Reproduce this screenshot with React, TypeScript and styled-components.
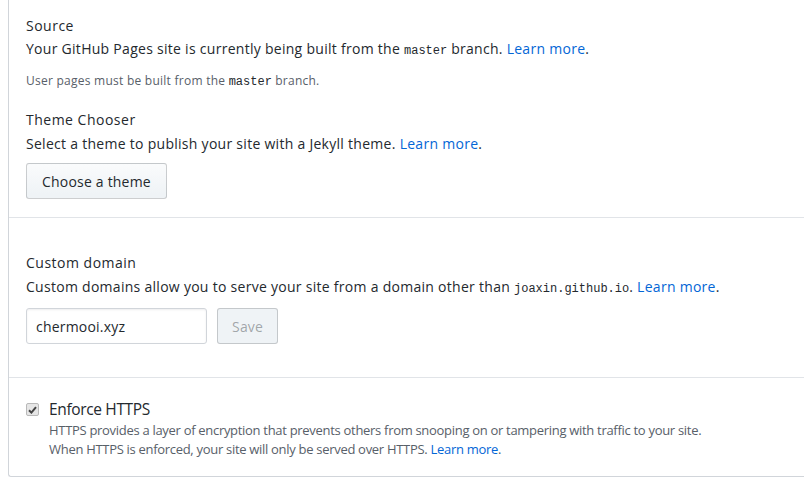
import React from "react";
import styled, { createGlobalStyle } from "styled-components";

const Global = createGlobalStyle`
  html, body { margin: 0; padding: 0; background: #fff; }
  body {
    font-family: "Open Sans", "Noto Sans", sans-serif;
    color: #24292e;
    -webkit-font-smoothing: antialiased;
  }
`;

const Page = styled.div`
  padding-left: 8px;
`;

const Box = styled.div`
  border-left: 1px solid #d1d5da;
  border-bottom: 1px solid #d1d5da;
  border-bottom-left-radius: 3px;
`;

const Section = styled.section<{ $pt: number; $pb: number; $divider?: boolean }>`
  padding: ${(p) => p.$pt}px 18px ${(p) => p.$pb}px 17px;
  border-bottom: ${(p) => (p.$divider ? "1px solid #e1e4e8" : "none")};
  display: flex;
  flex-direction: column;
  align-items: flex-start;
`;

const Heading = styled.h3<{ $mt?: number; $mb?: number }>`
  margin: ${(p) => p.$mt ?? 0}px 0 ${(p) => p.$mb ?? 1}px;
  font-size: 14px;
  line-height: 22px;
  font-weight: 400;
  letter-spacing: 0.5px;
  color: #24292e;
`;

const Text = styled.p`
  margin: 0;
  font-size: 14px;
  line-height: 21px;
  letter-spacing: 0.28px;
  white-space: nowrap;
`;

const Note = styled.p<{ $mt?: number }>`
  margin: ${(p) => p.$mt ?? 0}px 0 0;
  font-size: 12px;
  line-height: 18px;
  color: #586069;
  letter-spacing: 0.25px;
  white-space: nowrap;
`;

const Code = styled.code`
  font-family: "Liberation Mono", "DejaVu Sans Mono", monospace;
  font-size: 12px;
  letter-spacing: 0;
  color: #24292e;
`;

const Link = styled.a`
  color: #0366d6;
  text-decoration: none;
`;

const Button = styled.button<{ $mt?: number; $px?: number; $disabled?: boolean }>`
  margin-top: ${(p) => p.$mt ?? 0}px;
  height: 36px;
  padding: 0 ${(p) => p.$px ?? 15}px;
  font-family: inherit;
  font-size: 14px;
  letter-spacing: 0.2px;
  color: ${(p) => (p.$disabled ? "rgba(36,41,46,0.4)" : "#24292e")};
  background: ${(p) =>
    p.$disabled ? "#eff3f6" : "linear-gradient(-180deg, #fafbfc 0%, #eff3f6 90%)"};
  border: 1px solid rgba(27, 31, 35, 0.2);
  border-radius: 3px;
  box-sizing: border-box;
`;

const FormRow = styled.div`
  margin-top: 8px;
  display: flex;
  gap: 10px;
`;

const Input = styled.input`
  width: 181px;
  height: 36px;
  box-sizing: border-box;
  padding: 0 9px;
  font-family: inherit;
  font-size: 14px;
  letter-spacing: 0.2px;
  color: #24292e;
  border: 1px solid #d1d5da;
  border-radius: 3px;
  outline: none;
  box-shadow: inset 0 1px 2px rgba(27, 31, 35, 0.075);
`;

const CheckRow = styled.div`
  display: flex;
  gap: 10px;
  align-items: flex-start;
`;

const CheckBox = styled.span`
  margin-top: 6px;
  width: 13px;
  height: 13px;
  box-sizing: border-box;
  border: 1px solid #b9b9b9;
  background: #e6e6e6;
  border-radius: 2px;
  display: flex;
  align-items: center;
  justify-content: center;
  flex: none;
`;

const CheckBody = styled.div`
  display: flex;
  flex-direction: column;
`;

const Label = styled.div`
  font-size: 15.5px;
  line-height: 24px;
  letter-spacing: -0.35px;
`;

const Desc = styled.div`
  font-size: 13px;
  line-height: 19px;
  color: #586069;
  letter-spacing: -0.3px;
  white-space: nowrap;
`;

export default function App() {
  return (
    <>
      <Global />
      <Page>
        <Box>
          <Section $pt={15} $pb={18} $divider>
            <Heading>Source</Heading>
            <Text>
              Your GitHub Pages site is currently being built from the <Code>master</Code> branch.{" "}
              <Link href="#">Learn more</Link>.
            </Text>
            <Note $mt={10}>
              User pages must be built from the <Code>master</Code> branch.
            </Note>
            <Heading $mt={18} $mb={2}>Theme Chooser</Heading>
            <Text>
              Select a theme to publish your site with a Jekyll theme. <Link href="#">Learn more</Link>.
            </Text>
            <Button $mt={9}>Choose a theme</Button>
          </Section>
          <Section $pt={34} $pb={33} $divider>
            <Heading $mb={2}>Custom domain</Heading>
            <Text>
              Custom domains allow you to serve your site from a domain other than{" "}
              <Code>joaxin.github.io</Code>. <Link href="#">Learn more</Link>.
            </Text>
            <FormRow>
              <Input defaultValue="chermooi.xyz" />
              <Button $disabled $px={14} disabled>
                Save
              </Button>
            </FormRow>
          </Section>
          <Section $pt={19} $pb={17}>
            <CheckRow>
              <CheckBox>
                <svg width="9" height="8" viewBox="0 0 9 8">
                  <path d="M1 4.2 L3.4 6.6 L8 1.2" fill="none" stroke="#444" strokeWidth="2" />
                </svg>
              </CheckBox>
              <CheckBody>
                <Label>Enforce HTTPS</Label>
                <Desc>
                  HTTPS provides a layer of encryption that prevents others from snooping on or tampering with traffic to your site.
                </Desc>
                <Desc>
                  When HTTPS is enforced, your site will only be served over HTTPS. <Link href="#">Learn more</Link>.
                </Desc>
              </CheckBody>
            </CheckRow>
          </Section>
        </Box>
      </Page>
    </>
  );
}
